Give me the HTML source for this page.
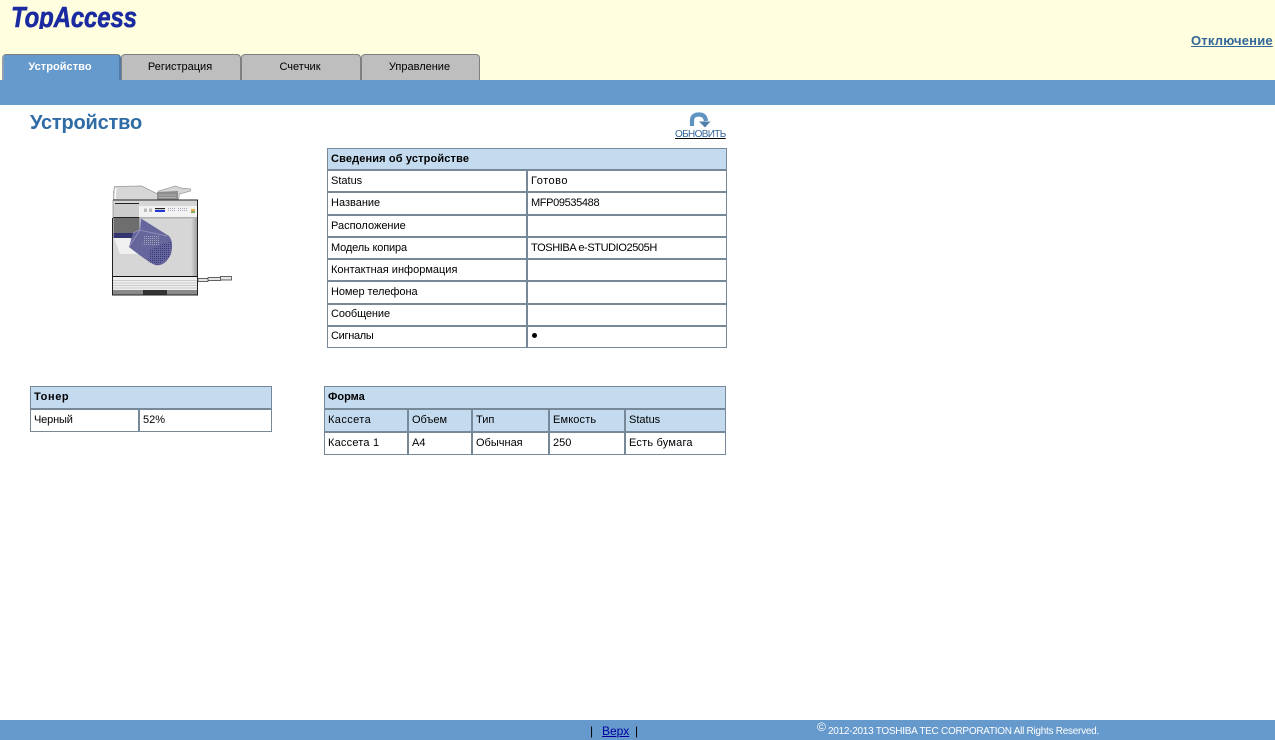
<!DOCTYPE html>
<html lang="ru"><head><meta charset="utf-8"><title>TopAccess</title>
<style>
html,body{margin:0;padding:0;background:#fff;width:1275px;height:740px;overflow:hidden}
body{position:relative;font-family:"Liberation Sans",Arial,sans-serif;font-size:11px;color:#000}
.a{position:absolute}
.t{position:absolute;white-space:nowrap;line-height:14px;height:14px;font-size:11px;color:#000}
.b{font-weight:bold}
.tab{position:absolute;top:54px;height:26px;box-sizing:border-box;background:#bebebe;border:1px solid #808080;border-bottom:0;border-radius:4px 4px 0 0;text-align:center;line-height:25px;font-size:11px;color:#000;padding-right:2px}
.tab.on{background:#6699cc;color:#fff;font-weight:bold;border-right:2px solid #4f7ba8;border-left:2px solid #8f9faf;letter-spacing:.05px;padding-right:3px}
</style></head><body>
<div class="a" style="left:0;top:0;width:1275px;height:80px;background:#ffffdf"></div>
<div class="a" style="left:0;top:80px;width:1275px;height:25px;background:#6699cc"></div>
<div class="a" style="left:0;top:720px;width:1275px;height:20px;background:#6699cc"></div>

<svg class="a" style="left:0;top:0" width="150" height="29" viewBox="0 0 150 29">
<text transform="scale(1,1.2)" x="11" y="22.500" font-family="Liberation Sans" font-weight="bold" font-style="italic" font-size="24" fill="#1a2aa0" textLength="126" lengthAdjust="spacing" stroke="#1a2aa0" stroke-width=".5">TopAccess</text>
</svg>

<a class="a b" style="left:1191px;top:33px;font-size:13px;line-height:15px;color:#336699;text-decoration:underline;white-space:nowrap;letter-spacing:.2px">Отключение</a>

<div class="tab on" style="left:2px;width:119px">Устройство</div>
<div class="tab" style="left:121px;width:120px">Регистрация</div>
<div class="tab" style="left:241px;width:120px">Счетчик</div>
<div class="tab" style="left:361px;width:119px">Управление</div>

<div class="a b" style="left:30px;top:111px;font-size:20px;line-height:24px;color:#2f6ca6;white-space:nowrap;letter-spacing:-.2px">Устройство</div>

<svg class="a" style="left:686px;top:111px" width="26" height="18" viewBox="0 0 26 18">
<path d="M6 15V9.500C6 5 9 3.500 13 3.500S19.500 5.500 20 10" fill="none" stroke="#5f93c0" stroke-width="4.200"/>
<path d="M13 10.500h11.500l-5.500 6z" fill="#4f7fa8"/>
</svg>
<a class="a" style="left:675px;top:128px;font-size:10px;line-height:13px;color:#336699;text-decoration:underline;text-decoration-color:#000;white-space:nowrap;letter-spacing:-.65px">ОБНОВИТЬ</a>

<svg class="a" style="left:0;top:0" width="1275" height="740" viewBox="0 0 1275 740" shape-rendering="crispEdges">
<rect x="327" y="148" width="400" height="22" fill="#c3daef"/>
<g fill="#778899">
<rect x="327" y="148" width="400" height="1"/><rect x="327" y="347" width="400" height="1"/>
<rect x="327" y="148" width="1" height="200"/><rect x="726" y="148" width="1" height="200"/>
<rect x="327" y="169" width="400" height="2"/><rect x="327" y="191" width="400" height="2"/>
<rect x="327" y="214" width="400" height="2"/><rect x="327" y="236" width="400" height="2"/>
<rect x="327" y="258" width="400" height="2"/><rect x="327" y="280" width="400" height="2"/>
<rect x="327" y="303" width="400" height="2"/><rect x="327" y="325" width="400" height="2"/>
<rect x="526" y="170" width="2" height="178"/>
</g>
<rect x="30" y="386" width="242" height="23" fill="#c3daef"/>
<g fill="#778899">
<rect x="30" y="386" width="242" height="1"/><rect x="30" y="431" width="242" height="1"/>
<rect x="30" y="386" width="1" height="46"/><rect x="271" y="386" width="1" height="46"/>
<rect x="30" y="408" width="242" height="2"/><rect x="138" y="409" width="2" height="23"/>
</g>
<rect x="324" y="386" width="402" height="46" fill="#c3daef"/>
<g fill="#778899">
<rect x="324" y="386" width="402" height="1"/><rect x="324" y="454" width="402" height="1"/>
<rect x="324" y="386" width="1" height="69"/><rect x="725" y="386" width="1" height="69"/>
<rect x="324" y="408" width="402" height="2"/><rect x="324" y="431" width="402" height="2"/>
<rect x="407" y="409" width="2" height="46"/><rect x="471" y="409" width="2" height="46"/>
<rect x="548" y="409" width="2" height="46"/><rect x="624" y="409" width="2" height="46"/>
</g>
</svg>

<svg class="a" style="left:90px;top:170px" width="160" height="140" viewBox="0 0 160 140">
<defs>
<pattern id="d1" width="2" height="2" patternUnits="userSpaceOnUse"><rect width="1" height="1" fill="#33337a"/></pattern>
<pattern id="d2" width="2" height="2" patternUnits="userSpaceOnUse"><rect width="1" height="1" fill="#a5a5b8"/></pattern>
<linearGradient id="sd" x1="0" x2="1" y1="0" y2="0"><stop offset="0" stop-color="#d8d8d8"/><stop offset="1" stop-color="#9c9c9c"/></linearGradient>
</defs>
<path d="M23.500 30V22l1-5.500 27-.5 16 8 1-3 17-5 5 2 10 1-0 2-11 3-1 6z" fill="#d6d6d6" stroke="#9a9a9a" stroke-width=".7"/>
<path d="M26 18l-1 11" stroke="#fff" stroke-width="1.200"/>
<path d="M67 22l21-1v9H67z" fill="#8e8e8e"/>
<path d="M69 25h17M69 27.500h17" stroke="#bbb" stroke-width=".7"/>
<rect x="23" y="30" width="84.500" height="95" fill="#d6d6d6"/>
<rect x="23" y="36" width="84.500" height="12" fill="#f2f2f2"/>
<rect x="23" y="47" width="84.500" height="1.500" fill="#b0b0b0"/>
<rect x="23" y="33.500" width="26" height="14" fill="#cccccc"/>
<path d="M25 33.500H49M23 47.500H49" stroke="#222" stroke-width="1"/>
<rect x="54" y="38.500" width="3" height="3.500" fill="#bbb"/><rect x="59" y="38.500" width="3" height="3.500" fill="#bbb"/>
<rect x="65" y="38" width="10" height="1.200" fill="#222"/><rect x="65" y="40" width="10" height="2" fill="#2336d8"/>
<rect x="78" y="38" width="8" height="4" fill="url(#d2)"/><rect x="88" y="38" width="10" height="4" fill="url(#d2)"/>
<rect x="101" y="39" width="4" height="2" fill="#e8b040"/><rect x="101" y="41" width="4" height="2" fill="#8aa860"/>
<rect x="23.500" y="48" width="26" height="16" fill="#6e6e6e"/>
<rect x="23.500" y="63" width="20" height="5" fill="#34346e"/>
<path d="M24 68h15l16 16H30z" fill="#f0f0f0"/>
<path d="M51 48.500L79 66Q84 72 81 84 75 97 65 95 58 92 39 77L43 63 50 60z" fill="#66669c"/>
<path d="M51 48.500L50 60 39 77M43 63l6-3 28 6" fill="none" stroke="#9797c4" stroke-width=".8"/>
<path d="M54 66h16v10H52z" fill="url(#d2)"/>
<path d="M58 92L60 80 72 74 81 72 80 86 68 95z" fill="url(#d1)"/>
<rect x="101" y="48" width="6.500" height="59" fill="url(#sd)"/>
<rect x="23" y="107" width="84.500" height="13" fill="#f0f0f0"/>
<path d="M23 110.500h84M23 113h84M23 115.500h84M23 118h84" stroke="#bdbdbd" stroke-width=".8"/>
<rect x="23" y="120" width="84.500" height="5" fill="#8a8a8a"/>
<rect x="53" y="120" width="24" height="5" fill="#333"/>
<path d="M23 30H107.500V125H22.500V48" fill="none" stroke="#222" stroke-width="1"/>
<path d="M23 30v18" stroke="#888" stroke-width=".7"/>
<path d="M22.500 106.500H107.500" stroke="#111" stroke-width=".9"/>
<path d="M108 108.500h10v3h-10zM118 107.500h12.500v3H118zM130.500 106.500h11v3.500h-11z" fill="#e6e6e6" stroke="#333" stroke-width=".7"/>
</svg>

<div class="t b" style="left:331px;top:152px;letter-spacing:.14px">Сведения об устройстве</div>
<div class="t" style="left:331px;top:174px">Status</div><div class="t" style="left:531px;top:174px;letter-spacing:.5px">Готово</div>
<div class="t" style="left:331px;top:196px">Название</div><div class="t" style="left:531px;top:196px;letter-spacing:-.36px">MFP09535488</div>
<div class="t" style="left:331px;top:219px">Расположение</div>
<div class="t" style="left:331px;top:241px;letter-spacing:-.15px">Модель копира</div><div class="t" style="left:531px;top:241px;letter-spacing:-.4px">TOSHIBA e-STUDIO2505H</div>
<div class="t" style="left:331px;top:263px">Контактная информация</div>
<div class="t" style="left:331px;top:285px;letter-spacing:-.07px">Номер телефона</div>
<div class="t" style="left:331px;top:307px;letter-spacing:-.1px">Сообщение</div>
<div class="t" style="left:331px;top:329px;letter-spacing:-.3px">Сигналы</div>
<div class="a" style="left:532px;top:333px;width:5px;height:5px;border-radius:50%;background:#000"></div>

<div class="t b" style="left:34px;top:390px;letter-spacing:.6px">Тонер</div>
<div class="t" style="left:34px;top:413px;letter-spacing:-.15px">Черный</div><div class="t" style="left:143px;top:413px">52%</div>

<div class="t b" style="left:328px;top:390px">Форма</div>
<div class="t" style="left:328px;top:413px;letter-spacing:.4px">Кассета</div><div class="t" style="left:412px;top:413px">Объем</div><div class="t" style="left:476px;top:413px">Тип</div><div class="t" style="left:553px;top:413px;letter-spacing:.15px">Емкость</div><div class="t" style="left:629px;top:413px">Status</div>
<div class="t" style="left:328px;top:436px;letter-spacing:.2px">Кассета 1</div><div class="t" style="left:412px;top:436px">A4</div><div class="t" style="left:476px;top:436px">Обычная</div><div class="t" style="left:553px;top:436px">250</div><div class="t" style="left:629px;top:436px;letter-spacing:.2px">Есть бумага</div>

<div class="a" style="left:590px;top:724px;font-size:12px;line-height:15px;white-space:nowrap">|</div>
<a class="a" style="left:602px;top:724px;font-size:12px;line-height:15px;color:#0000a0;text-decoration:underline;white-space:nowrap">Верх</a>
<div class="a" style="left:635px;top:724px;font-size:12px;line-height:15px;white-space:nowrap">|</div>
<div class="a" style="left:817px;top:721px;font-size:12px;line-height:13px;color:#fff;white-space:nowrap">©</div>
<div class="a" style="left:828px;top:725px;font-size:10px;line-height:13px;color:#fff;white-space:nowrap;letter-spacing:-.27px">2012-2013 TOSHIBA TEC CORPORATION All Rights Reserved.</div>
</body></html>
